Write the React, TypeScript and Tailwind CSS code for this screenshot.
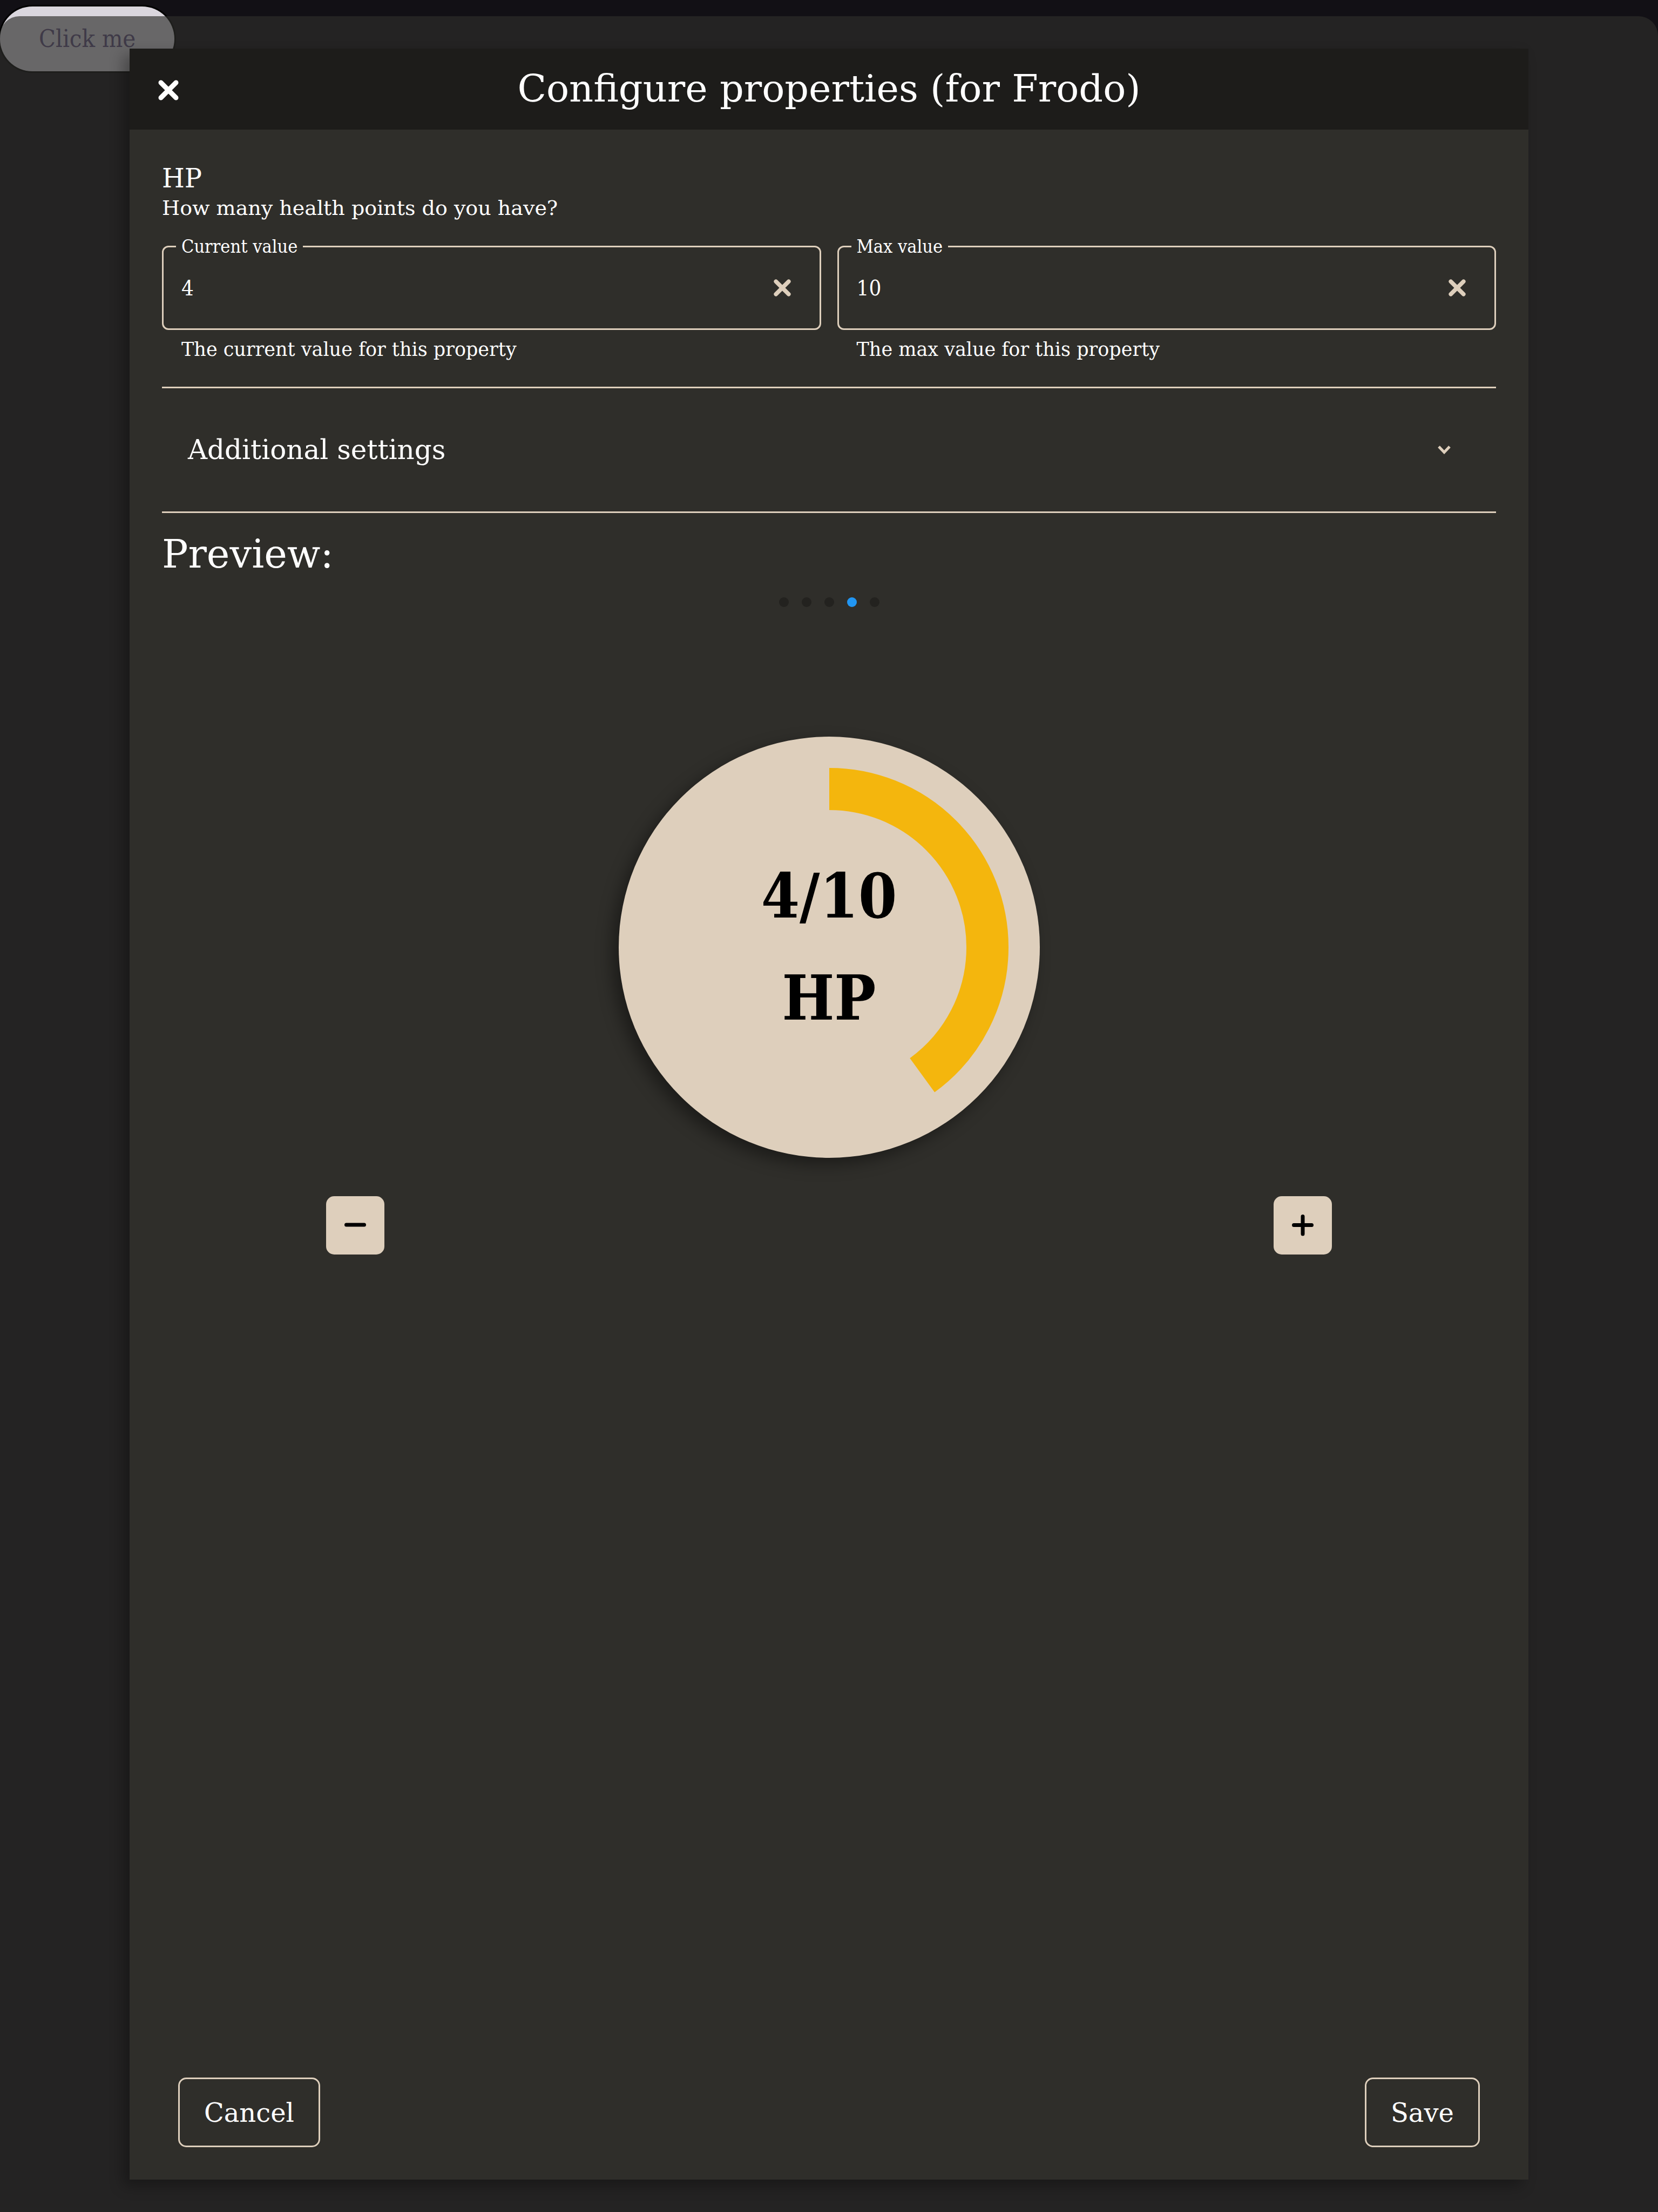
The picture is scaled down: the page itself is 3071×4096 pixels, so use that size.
import { useState } from "react";

type FieldProps = {
  id: string;
  label: string;
  helper: string;
  value: string;
  onChange: (value: string) => void;
};

function CloseIcon({ className }: { className: string }) {
  return (
    <svg viewBox="0 0 38 38" className={className} fill="none" stroke="currentColor" strokeWidth="9" strokeLinecap="round" aria-hidden="true">
      <path d="M5 5 33 33M33 5 5 33" />
    </svg>
  );
}

function Field({ id, label, helper, value, onChange }: FieldProps) {
  return (
    <div className="min-w-0">
      <fieldset className="min-w-0 rounded-xl border-3 border-[#decfbc] px-[23px] pb-4">
        <legend className="px-[10px] font-['DejaVu_Serif_Condensed','DejaVu_Serif',serif] text-[34px] leading-9">
          <label htmlFor={id}>{label}</label>
        </legend>
        <div className="flex h-[118px] items-center pl-[10px] pr-[30px]">
          <input
            id={id}
            inputMode="numeric"
            className="min-w-0 flex-1 bg-transparent font-['DejaVu_Serif_Condensed','DejaVu_Serif',serif] text-[40px] leading-[60px] outline-none"
            value={value}
            onChange={(e) => onChange(e.target.value)}
          />
          <button type="button" aria-label={`Clear ${label}`} className="text-[#decfbc]" onClick={() => onChange("")}>
            <CloseIcon className="size-8" />
          </button>
        </div>
      </fieldset>
      <p className="mt-3 pl-9 text-[35px] leading-12">{helper}</p>
    </div>
  );
}

function Gauge({ current, max }: { current: number; max: number }) {
  const percent = max > 0 ? Math.min(100, (current / max) * 100) : 0;
  return (
    <div className="grid size-[780px] place-items-center rounded-full bg-[#decfbc] text-black shadow-[-12px_12px_30px_rgba(0,0,0,0.4)]">
      <svg viewBox="0 0 780 780" className="col-start-1 row-start-1 size-full" aria-hidden="true">
        <circle
          cx="390"
          cy="390"
          r="293"
          fill="none"
          stroke="#f4b60d"
          strokeWidth="78"
          pathLength="100"
          strokeDasharray={`${percent} 100`}
          transform="rotate(-90 390 390)"
        />
      </svg>
      <div className="col-start-1 row-start-1 text-center font-['DejaVu_Serif_Condensed','DejaVu_Serif',serif] text-[114px] leading-[189px] font-bold">
        <p>{current}/{max}</p>
        <p>HP</p>
      </div>
    </div>
  );
}

export default function App() {
  const [current, setCurrent] = useState("4");
  const [max, setMax] = useState("10");
  const step = (delta: number) => setCurrent(String(Math.max(0, Math.min(Number(max), Number(current) + delta))));

  return (
    <div className="relative flex min-h-screen flex-col bg-[#121015] pt-[30px] font-['DejaVu_Serif',serif] text-white">
      <button
        type="button"
        className="absolute top-3 left-0 h-30 rounded-full bg-[#dad6de] px-[72px] font-['DejaVu_Serif_Condensed','DejaVu_Serif',serif] text-[45px] text-[#605280] ring-3 ring-black"
      >
        Click me
      </button>
      <div className="relative flex flex-1 flex-col rounded-t-[36px] bg-[rgba(45,45,43,0.66)] px-60 py-15">
        <section role="dialog" aria-labelledby="dialog-title" className="flex flex-1 flex-col bg-[#2f2e2a] shadow-[-12px_12px_24px_rgba(0,0,0,0.3)]">
          <header className="flex h-[150px] items-center bg-[#1d1c1a] px-[53px]">
            <button type="button" aria-label="Close" className="mt-1">
              <CloseIcon className="size-[38px]" />
            </button>
            <h1 id="dialog-title" className="flex-1 pr-[38px] pb-0.5 text-center text-[70px] leading-24">
              Configure properties (for Frodo)
            </h1>
          </header>

          <main className="flex flex-1 flex-col px-15 pt-15">
            <h2 className="text-[48px] leading-15">HP</h2>
            <p className="text-[38px] leading-[50px]">How many health points do you have?</p>

            <div className="mt-7 grid grid-cols-2 gap-[30px]">
              <Field id="current" label="Current value" helper="The current value for this property" value={current} onChange={setCurrent} />
              <Field id="max" label="Max value" helper="The max value for this property" value={max} onChange={setMax} />
            </div>

            <button type="button" className="mt-[45px] flex h-[234px] items-center justify-between border-y-3 border-[#decfbc] pr-[84px] pl-12 text-[50px]">
              Additional settings
              <svg viewBox="0 0 24 16" className="h-4 w-6 text-[#decfbc]" fill="none" stroke="currentColor" strokeWidth="5" aria-hidden="true">
                <path d="M2 2 12 12.500 22 2" />
              </svg>
            </button>

            <h2 className="mt-7 text-[72px] leading-24">Preview:</h2>

            <div className="mt-8 flex justify-center gap-6">
              {[0, 1, 2, 3, 4].map((i) => (
                <span key={i} className={i === 3 ? "size-[18px] rounded-full bg-[#2196f3]" : "size-[18px] rounded-full bg-[#23221f]"} />
              ))}
            </div>

            <div className="mt-60 flex justify-center">
              <Gauge current={Number(current)} max={Number(max)} />
            </div>

            <div className="mt-[71px] flex justify-between px-76">
              <button type="button" aria-label="Decrease" className="grid size-27 place-items-center rounded-[15px] bg-[#decfbc] text-black" onClick={() => step(-1)}>
                <svg viewBox="0 0 40 40" className="size-10" stroke="currentColor" strokeWidth="7" strokeLinecap="round" aria-hidden="true">
                  <path d="M3.500 19H36.500" />
                </svg>
              </button>
              <button type="button" aria-label="Increase" className="grid size-27 place-items-center rounded-[15px] bg-[#decfbc] text-black" onClick={() => step(1)}>
                <svg viewBox="0 0 40 40" className="size-10" stroke="currentColor" strokeWidth="7" strokeLinecap="round" aria-hidden="true">
                  <path d="M3.500 19.500H36.500M20 3.500V36" />
                </svg>
              </button>
            </div>
          </main>

          <footer className="flex justify-between px-[90px] pb-15">
            <button type="button" className="h-[129px] rounded-[15px] border-3 border-[#decfbc] px-[45px] text-[48px]">
              Cancel
            </button>
            <button type="button" className="h-[129px] rounded-[15px] border-3 border-[#decfbc] px-[45px] text-[48px]">
              Save
            </button>
          </footer>
        </section>
      </div>
    </div>
  );
}
